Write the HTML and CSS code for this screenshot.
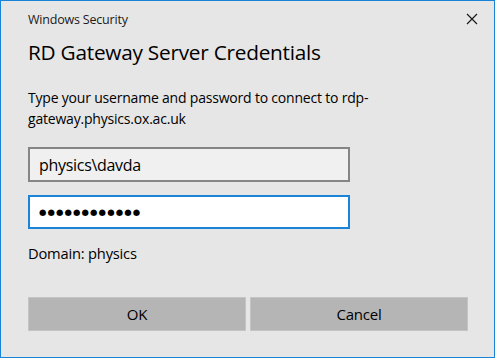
FILE: index.html
```html
<!DOCTYPE html>
<html lang="en">
<head>
<meta charset="utf-8">
<title>Windows Security</title>
<link rel="stylesheet" href="styles.css">
</head>
<body>
<div class="window">
  <div class="titlebar">
    <span class="app-title">Windows Security</span>
    <span class="close" aria-label="Close">
      <svg width="12" height="12" viewBox="0 0 12 12"><path d="M1 1 L11 11 M11 1 L1 11" stroke="#1a1a1a" stroke-width="1.2" fill="none"/></svg>
    </span>
  </div>
  <h1 class="heading">RD Gateway Server Credentials</h1>
  <p class="message">Type your username and password to connect to rdp-gateway.physics.ox.ac.uk</p>
  <div class="field field-user">physics\davda</div>
  <div class="field field-pass"><span class="dots">●●●●●●●●●●●●</span></div>
  <p class="domain">Domain: physics</p>
  <div class="buttons">
    <button class="btn">OK</button>
    <button class="btn">Cancel</button>
  </div>
</div>
</body>
</html>
```
FILE: styles.css
```css
html, body {
  margin: 0;
  padding: 0;
  background: #ffffff;
}
body {
  font-family: "Open Sans", "Noto Sans", "Liberation Sans", sans-serif;
  color: #000;
}
.window {
  box-sizing: border-box;
  width: 495px;
  height: 358px;
  border: 1px solid #1883d7;
  background: #e6e6e6;
  padding: 0 26px 0 27px;
  display: flex;
  flex-direction: column;
}
.titlebar {
  height: 36px;
  display: flex;
  align-items: center;
  justify-content: space-between;
  margin-right: -22px;
}
.app-title {
  font-size: 12.5px;
  color: #1a1a1a;
  letter-spacing: -0.2px;
}
.close {
  width: 36px;
  height: 36px;
  display: flex;
  align-items: center;
  justify-content: center;
}
.heading {
  margin: 2px 0 0 0;
  font-weight: 400;
  font-size: 20.8px;
  line-height: 26px;
  letter-spacing: -0.25px;
  color: #000;
}
.message {
  margin: 22px 0 0 0;
  font-size: 14px;
  line-height: 21px;
  letter-spacing: -0.2px;
  width: 385px;
  color: #000;
}
.field {
  box-sizing: border-box;
  width: 322px;
  height: 35px;
  display: flex;
  align-items: center;
  padding-left: 9px;
  font-size: 16px;
  letter-spacing: -0.3px;
}
.field-user {
  margin-top: 18px;
  border: 2px solid #858585;
  background: #f0f0f0;
}
.field-pass {
  margin-top: 13px;
  height: 34px;
  border: 2px solid #1a84d9;
  background: #ffffff;
}
.dots {
  font-family: "DejaVu Sans", sans-serif;
  font-size: 8.5px;
  letter-spacing: 1.1px;
  color: #000;
}
.domain {
  margin: 14px 0 0 0;
  font-size: 14.7px;
  line-height: 20px;
  letter-spacing: -0.2px;
}
.buttons {
  margin-top: 34px;
  display: flex;
  gap: 4px;
  width: 440px;
}
.btn {
  flex: 1;
  height: 34px;
  border: 1px solid #c4c4c4;
  background: #b5b5b5;
  font-family: inherit;
  font-size: 15px;
  color: #000;
  letter-spacing: -0.2px;
  padding: 0;
}
```
